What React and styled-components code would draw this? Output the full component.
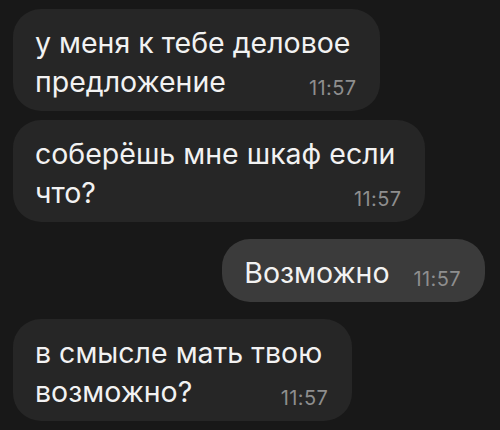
import React from "react";
import styled, { createGlobalStyle } from "styled-components";

const GlobalStyle = createGlobalStyle`
  html, body {
    margin: 0;
    padding: 0;
    background: #181818;
  }
  body {
    font-family: Inter, "Liberation Sans", Arial, sans-serif;
    -webkit-font-smoothing: antialiased;
  }
`;

const messages = [
  { id: 1, out: false, lines: ["у меня к тебе деловое", "предложение"], time: "11:57" },
  { id: 2, out: false, lines: ["соберёшь мне шкаф если", "что?"], time: "11:57" },
  { id: 3, out: true, lines: ["Возможно"], time: "11:57" },
  { id: 4, out: false, lines: ["в смысле мать твою", "возможно?"], time: "11:57" },
];

export default function App() {
  return (
    <Chat>
      <GlobalStyle />
      {messages.map((m, idx) => (
        <Row
          key={m.id}
          $out={m.out}
          $afterOut={idx > 0 && messages[idx - 1].out !== m.out}
        >
          <Bubble $out={m.out}>
            {m.lines.slice(0, -1).map((line, i) => (
              <Line key={i}>{line}</Line>
            ))}
            <LastLine>
              <span>{m.lines[m.lines.length - 1]}</span>
              <Time>{m.time}</Time>
            </LastLine>
          </Bubble>
        </Row>
      ))}
    </Chat>
  );
}

const Chat = styled.div`
  width: 500px;
  height: 430px;
  box-sizing: border-box;
  padding: 9px 15px 0 13px;
  display: flex;
  flex-direction: column;
  gap: 9px;
  overflow: hidden;
`;

const Row = styled.div`
  display: flex;
  justify-content: ${(p) => (p.$out ? "flex-end" : "flex-start")};
  margin-top: ${(p) => (p.$afterOut ? "8px" : "0")};
`;

const Bubble = styled.div`
  background: ${(p) => (p.$out ? "#3b3b3b" : "#262626")};
  color: #f2f2f2;
  border-radius: 28px;
  padding: 14px 24px 10px 22px;
  font-size: 28.5px;
  line-height: 39px;
`;

const Line = styled.div`
  padding-right: 6px;
  white-space: nowrap;
`;

const LastLine = styled.div`
  display: flex;
  align-items: flex-end;
  justify-content: space-between;
  gap: 24px;
  white-space: nowrap;
`;

const Time = styled.span`
  font-size: 20px;
  letter-spacing: 0.4px;
  line-height: 20px;
  color: #8e8e8e;
  padding-bottom: 3px;
`;
